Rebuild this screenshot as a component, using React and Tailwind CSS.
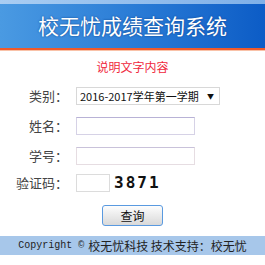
import React from "react";

const font = { fontFamily: '"SimSun", "Noto Sans CJK SC", "DejaVu Sans", sans-serif' };

const Row = ({ label, children, h = "h-[30px]" }) => (
  <div className={`flex items-center ${h}`}>
    <div className="w-[70px] text-right text-[13px] text-[#444] pr-[2px]">{label}</div>
    <div className="ml-[6px] flex items-center">{children}</div>
  </div>
);

export default function App() {
  return (
    <div className="w-[265px] h-[265px] bg-white overflow-hidden" style={font}>
      <div className="h-[4px] bg-gradient-to-r from-[#a9cdf2] to-[#7fb0e8]" />
      <div className="h-[44px] bg-gradient-to-r from-[#4a9ae2] via-[#2a7cd6] to-[#0c5cc6] flex items-center justify-center">
        <span className="text-white text-[21px] [text-shadow:0_0_2px_#0b3f8a]">校无忧成绩查询系统</span>
      </div>
      <div className="h-[2px] bg-[#f05a2a]" />
      <div className="h-[1px] bg-[#f9c2a8]" />

      <div className="h-[30px] flex items-center justify-center pt-[2px]">
        <span className="text-[#f0283c] text-[12px]">说明文字内容</span>
      </div>

      <div className="flex flex-col">
        <Row label="类别：">
          <div className="w-[144px] h-[18px] border border-[#d8d8d8] flex items-center justify-between pl-[3px] pr-[5px] text-[11px] text-[#111] whitespace-nowrap">
            <span>2016-2017学年第一学期</span>
            <span className="text-[7px]">▼</span>
          </div>
        </Row>
        <Row label="姓名：">
          <div className="w-[119px] h-[18px] border border-[#d6d2e6] border-t-[#b8b2d6]" />
        </Row>
        <Row label="学号：">
          <div className="w-[119px] h-[18px] border border-[#e6dde2] border-t-[#c9c2da]" />
        </Row>
        <Row label="验证码：" h="h-[24px]">
          <div className="w-[34px] h-[18px] border border-[#dcdcdc]" />
          <span className="ml-[4px] text-[16px] font-bold tracking-[2px] text-[#111]" style={{ fontFamily: '"DejaVu Sans Mono", monospace' }}>3871</span>
        </Row>
      </div>

      <div className="flex justify-center pt-[10px]">
        <button className="w-[61px] h-[21px] rounded-[3px] border border-[#5a9ae0] bg-gradient-to-b from-[#fdfdfd] to-[#d9d9d9] text-[12px] text-[#111]">查询</button>
      </div>

      <div className="mt-[10px] h-[19px] bg-[#a7c7ea] flex items-center justify-center text-[12px] text-[#222] whitespace-nowrap">
        <span style={{ fontFamily: '"Liberation Mono", monospace' }} className="text-[10px]">Copyright ©</span>
        <span className="ml-[4px]">校无忧科技 技术支持：校无忧</span>
      </div>
    </div>
  );
}
